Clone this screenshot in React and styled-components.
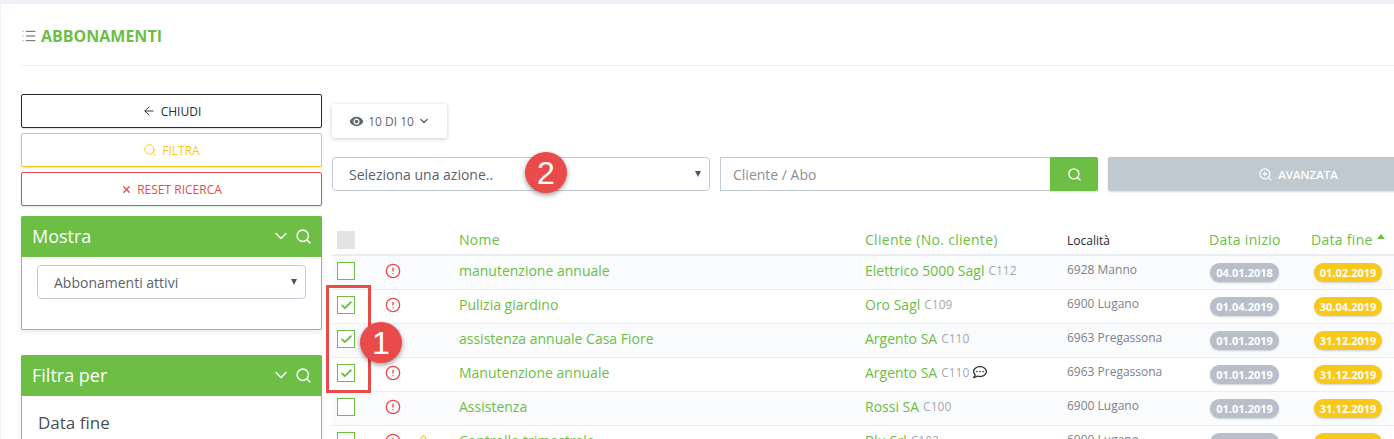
import React from "react";
import styled, { createGlobalStyle } from "styled-components";
import {
  ArrowLeft,
  ChevronDown,
  List,
  Search,
  TriangleAlert,
  X,
  ZoomIn,
  CircleAlert,
  Check,
} from "lucide-react";
import { FaRegCommentDots } from "react-icons/fa";
import { MdVisibility } from "react-icons/md";

const GREEN = "#6cbe45";
const YELLOW = "#f8c91c";
const RED = "#e94b4b";

const GlobalStyle = createGlobalStyle`
  html, body {
    margin: 0;
    height: 439px;
    overflow: hidden;
    background: #eef1f6;
    font-family: "Open Sans", "Liberation Sans", sans-serif;
  }
`;

const Card = styled.div`
  position: relative;
  margin: 4px 0 0 1px;
  width: 1393px;
  height: 435px;
  background: #fff;
  padding: 0 0 0 20px;
  box-sizing: border-box;
  overflow: hidden;
`;

const PageHead = styled.div`
  height: 62px;
  border-bottom: 1px solid #eceef1;
  display: flex;
  align-items: center;
  gap: 4px;
  padding-top: 2px;
  box-sizing: border-box;
  color: #55595f;
`;

const PageTitle = styled.h1`
  margin: 0;
  font-size: 16px;
  font-weight: 700;
  color: ${GREEN};
`;

const Columns = styled.div`
  display: flex;
  gap: 10px;
  padding-top: 28px;
`;

const Sidebar = styled.aside`
  width: 301px;
  flex: none;
  display: flex;
  flex-direction: column;
  gap: 5px;
`;

const SideButton = styled.button`
  height: 34px;
  display: flex;
  align-items: center;
  justify-content: center;
  gap: 5px;
  padding: 0;
  background: #fff;
  border: 1px solid ${(p) => p.$color};
  border-radius: 2px;
  color: ${(p) => p.$color};
  font: 400 12px "Open Sans", sans-serif;
  box-shadow: 0 1px 2px rgba(0, 0, 0, 0.12);
`;

const Panel = styled.section`
  border: 1px solid #62d09a;
  border-top: 0;
  border-radius: 2px;
  height: ${(p) => p.$height}px;
  margin-top: ${(p) => p.$top}px;
  box-shadow: 0 2px 5px rgba(0, 0, 0, 0.08);
  box-sizing: border-box;
  flex: none;
`;

const PanelHead = styled.div`
  height: 41px;
  box-sizing: border-box;
  margin: 0 -1px;
  padding: 0 10px 1px 11px;
  background: ${GREEN};
  color: #fff;
  display: flex;
  align-items: center;
  gap: 4px;
  font-size: 18px;
  border-radius: 2px 2px 0 0;
`;

const PanelName = styled.span`
  flex: 1;
`;

const SelectBox = styled.div`
  position: relative;
  height: 34px;
  box-sizing: border-box;
  border: 1px solid #c3cbd9;
  border-radius: 4px;
  color: #59626d;
  font-size: 14px;
  display: flex;
  align-items: center;
  padding-left: 16px;
  width: ${(p) => p.$width};
  margin: ${(p) => p.$margin || 0};
  flex: none;
  background: #fff;

  &::after {
    content: "";
    position: absolute;
    right: 8px;
    top: 13px;
    border-left: 3px solid transparent;
    border-right: 3px solid transparent;
    border-top: 6px solid #555;
  }
`;

const FieldLabel = styled.div`
  margin: 15px 0 0 16px;
  font-size: 17px;
  color: #4a4f57;
`;

const Main = styled.main`
  flex: none;
  width: 1100px;
`;

const ViewButton = styled.button`
  margin-top: 10px;
  width: 115px;
  height: 34px;
  display: flex;
  align-items: center;
  justify-content: center;
  gap: 4px;
  background: #fff;
  border: 0;
  border-radius: 2px;
  padding: 0;
  color: #5f6670;
  font: 500 12px "Open Sans", sans-serif;
  box-shadow: 0 1px 4px rgba(0, 0, 0, 0.2);
`;

const Toolbar = styled.div`
  display: flex;
  margin-top: 19px;
  height: 34px;

  & > * {
    flex: none;
  }
`;

const SearchInput = styled.div`
  width: 330px;
  margin-left: 10px;
  box-sizing: border-box;
  border: 1px solid #c3cbd9;
  border-right: 0;
  color: #8a9099;
  font-size: 14px;
  display: flex;
  align-items: center;
  padding-left: 12px;
`;

const SearchButton = styled.div`
  width: 48px;
  background: ${GREEN};
  color: #fff;
  display: flex;
  align-items: center;
  justify-content: center;
  border-radius: 0 2px 2px 0;
  box-shadow: 0 1px 2px rgba(0, 0, 0, 0.15);
`;

const AdvancedButton = styled.div`
  width: 380px;
  margin-left: 10px;
  background: #bfc9cf;
  color: #fff;
  display: flex;
  align-items: center;
  justify-content: center;
  gap: 5px;
  font-size: 11.5px;
  font-weight: 600;
  border-radius: 2px;
  box-shadow: 0 1px 2px rgba(0, 0, 0, 0.15);
`;

const COLS = "54px 73px 406px 202px 142px 102px 1fr";

const TableHead = styled.div`
  margin-top: 35px;
  height: 28px;
  display: grid;
  grid-template-columns: ${COLS};
  align-items: center;
  border-bottom: 2px solid #e9ecf1;
  box-sizing: content-box;
`;

const HeadCell = styled.div`
  font-size: ${(p) => (p.$dark ? "12px" : "14px")};
  font-weight: 500;
  letter-spacing: ${(p) => (p.$dark ? 0 : 0.3)}px;
  color: ${(p) => (p.$dark ? "#252a33" : GREEN)};
  display: flex;
  align-items: center;
  gap: 4px;
  margin-top: ${(p) => (p.$dark ? 0 : -2)}px;
`;

const Row = styled.div`
  height: 34px;
  box-sizing: border-box;
  padding-bottom: 3px;
  display: grid;
  grid-template-columns: ${COLS};
  align-items: center;
  border-bottom: 1px solid #e9ecf1;
  background: ${(p) => (p.$odd ? "#fafbfd" : "#fff")};
`;

const Box = styled.span`
  width: 18px;
  height: 18px;
  margin-left: 5px;
  box-sizing: border-box;
  border: ${(p) => (p.$head ? "0" : `1px solid ${GREEN}`)};
  background: ${(p) => (p.$head ? "#e3e3e3" : "#fff")};
  color: ${GREEN};
  display: flex;
  align-items: center;
  justify-content: center;
`;

const Flags = styled.div`
  display: flex;
  align-items: center;
  gap: 15px;
  margin-left: -1px;
`;

const NameCell = styled.div`
  font-size: 14px;
  color: ${GREEN};
  margin-top: -2px;
`;

const ClientCell = styled.div`
  display: flex;
  align-items: center;
  font-size: 14px;
  color: ${GREEN};
  gap: 4px;
  margin-top: -2px;
`;

const ClientCode = styled.span`
  font-size: 12px;
  color: #a4a9af;
  margin-top: 1px;
`;

const PlaceCell = styled.div`
  font-size: 12px;
  color: #7d8289;
  margin-top: -3px;
`;

const DateBadge = styled.span`
  width: ${(p) => p.$width}px;
  height: 19px;
  border-radius: 10px;
  margin: 3px 0 0 ${(p) => p.$left}px;
  background: ${(p) => p.$bg};
  color: #fff;
  font-size: 11px;
  font-weight: 700;
  display: flex;
  align-items: center;
  justify-content: center;
  box-shadow: 0 1px 2px rgba(0, 0, 0, 0.18);
`;

const SortArrow = styled.span`
  border-left: 4px solid transparent;
  border-right: 4px solid transparent;
  border-bottom: 5px solid ${GREEN};
  margin-top: -6px;
`;

const Highlight = styled.div`
  position: absolute;
  left: 325px;
  top: 281px;
  width: 45px;
  height: 108px;
  box-sizing: border-box;
  border: 3px solid ${RED};
`;

const Marker = styled.div`
  position: absolute;
  left: ${(p) => p.$x}px;
  top: ${(p) => p.$y}px;
  width: 42px;
  height: 40px;
  padding-top: 1px;
  border-radius: 50%;
  background: ${RED};
  color: #fff;
  font-size: 32px;
  display: flex;
  align-items: center;
  justify-content: center;
  box-shadow: 0 2px 5px rgba(0, 0, 0, 0.4);
  font-family: "Liberation Sans", sans-serif;
`;

const rows = [
  ["manutenzione annuale", "Elettrico 5000 Sagl", "C112", "6928 Manno", "04.01.2018", "01.02.2019"],
  ["Pulizia giardino", "Oro Sagl", "C109", "6900 Lugano", "01.04.2019", "30.04.2019", true],
  ["assistenza annuale Casa Fiore", "Argento SA", "C110", "6963 Pregassona", "01.01.2019", "31.12.2019", true],
  ["Manutenzione annuale", "Argento SA", "C110", "6963 Pregassona", "01.01.2019", "31.12.2019", true, true],
  ["Assistenza", "Rossi SA", "C100", "6900 Lugano", "01.01.2019", "31.12.2019"],
  ["Controllo trimestrale", "Blu Srl", "C102", "6900 Lugano", "01.01.2019", "31.12.2019", false, false, true],
];

function FilterPanel({ title, height, top, children }) {
  return (
    <Panel $height={height} $top={top}>
      <PanelHead>
        <PanelName>{title}</PanelName>
        <ChevronDown size={20} strokeWidth={1.8} />
        <Search size={17} strokeWidth={2.2} />
      </PanelHead>
      {children}
    </Panel>
  );
}

export default function App() {
  return (
    <>
      <GlobalStyle />
      <Card>
        <PageHead>
          <List size={16} strokeWidth={1.4} />
          <PageTitle>ABBONAMENTI</PageTitle>
        </PageHead>
        <Columns>
          <Sidebar>
            <SideButton $color="#262b35">
              <ArrowLeft size={14} strokeWidth={1.6} /> CHIUDI
            </SideButton>
            <SideButton $color={YELLOW}>
              <Search size={14} strokeWidth={1.6} /> FILTRA
            </SideButton>
            <SideButton $color={RED}>
              <X size={11} strokeWidth={3} /> RESET RICERCA
            </SideButton>
            <FilterPanel title="Mostra" height={114} top={5}>
              <SelectBox $width="269px" $margin="8px 0 0 15px">
                Abbonamenti attivi
              </SelectBox>
            </FilterPanel>
            <FilterPanel title="Filtra per" height={120} top={20}>
              <FieldLabel>Data fine</FieldLabel>
            </FilterPanel>
          </Sidebar>
          <Main>
            <ViewButton>
              <MdVisibility size={15} /> 10 DI 10
              <ChevronDown size={12} strokeWidth={3} />
            </ViewButton>
            <Toolbar>
              <SelectBox $width="378px">Seleziona una azione..</SelectBox>
              <SearchInput>Cliente / Abo</SearchInput>
              <SearchButton>
                <Search size={15} strokeWidth={2.2} />
              </SearchButton>
              <AdvancedButton>
                <ZoomIn size={15} strokeWidth={1.8} /> AVANZATA
              </AdvancedButton>
            </Toolbar>
            <TableHead>
              <Box $head />
              <span />
              <HeadCell>Nome</HeadCell>
              <HeadCell>Cliente (No. cliente)</HeadCell>
              <HeadCell $dark>Località</HeadCell>
              <HeadCell>Data inizio</HeadCell>
              <HeadCell>
                Data fine <SortArrow />
              </HeadCell>
            </TableHead>
            {rows.map((r, i) => (
              <Row key={r[0]} $odd={i % 2 === 0}>
                <Box>{r[6] && <Check size={13} strokeWidth={3.4} />}</Box>
                <Flags>
                  <CircleAlert size={16} color={RED} strokeWidth={2} />
                  {r[8] && <TriangleAlert size={15} color={YELLOW} strokeWidth={1.8} />}
                </Flags>
                <NameCell>{r[0]}</NameCell>
                <ClientCell>
                  {r[1]} <ClientCode>{r[2]}</ClientCode>
                  {r[7] && <FaRegCommentDots size={14} color="#333" />}
                </ClientCell>
                <PlaceCell>{r[3]}</PlaceCell>
                <DateBadge $bg="#b8bfcb" $width={69} $left={1}>
                  {r[4]}
                </DateBadge>
                <DateBadge $bg={YELLOW} $width={68} $left={3}>
                  {r[5]}
                </DateBadge>
              </Row>
            ))}
          </Main>
        </Columns>
        <Highlight />
        <Marker $x={359} $y={318}>
          1
        </Marker>
        <Marker $x={524} $y={148}>
          2
        </Marker>
      </Card>
    </>
  );
}
